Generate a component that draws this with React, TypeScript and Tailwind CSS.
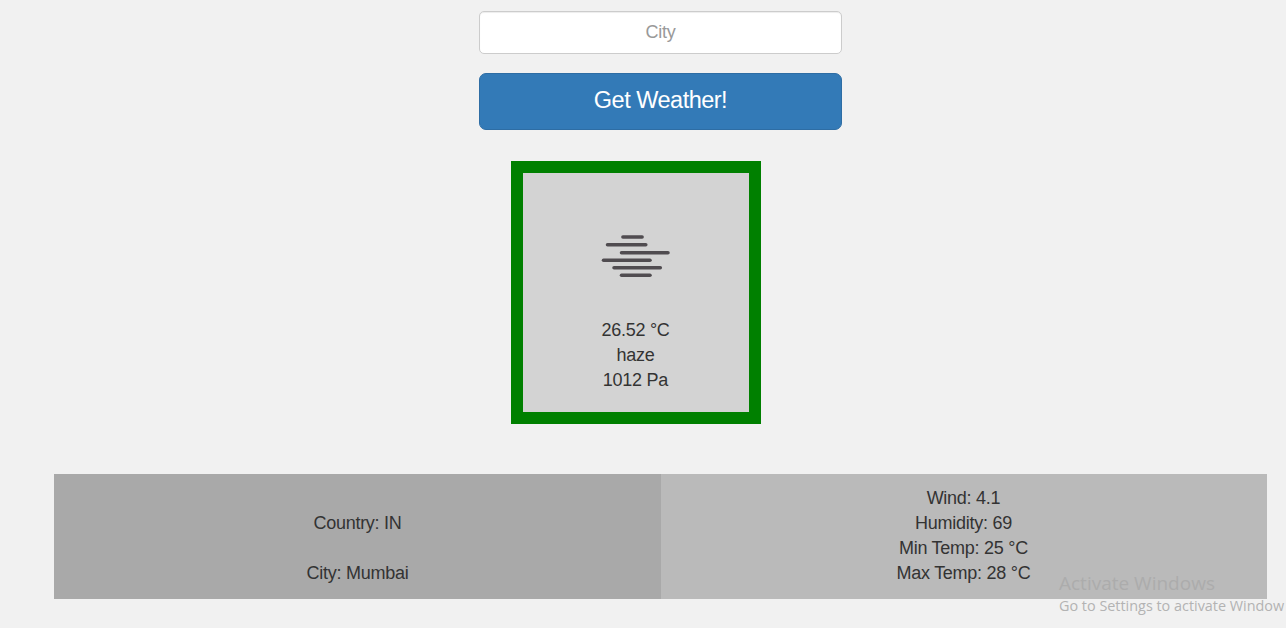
import React from "react";

const hazeBars: [number, number, number][] = [
  [19.2, 41.8, 4],
  [3.8, 45.5, 11.8],
  [17.8, 67.7, 19.8],
  [-0.2, 49.7, 27.2],
  [10.3, 60, 34.8],
  [17.8, 49.7, 42.2],
];

function HazeIcon() {
  return (
    <svg className="block h-[50px] w-[70px]" viewBox="-1 -1 70 50" aria-hidden="true">
      {hazeBars.map(([from, to, y]) => (
        <line
          key={y}
          x1={from + 1.7}
          x2={to - 1.7}
          y1={y}
          y2={y}
          stroke="#504c50"
          strokeWidth={3.5}
          strokeLinecap="round"
        />
      ))}
    </svg>
  );
}

export default function App() {
  return (
    <div className="relative h-[628px] w-full overflow-hidden bg-[#f1f1f1] pt-[11px] font-['Liberation_Sans',Arial,sans-serif] text-[18px] leading-[25px] tracking-[-0.26px] text-[#333333]">
      <form
        className="ml-[479px] flex w-[363px] flex-col gap-[19px]"
        onSubmit={(e) => e.preventDefault()}
      >
        <input
          className="h-[43px] w-full rounded-[5px] border border-[#cccccc] bg-white px-[15px] text-center tracking-[-0.26px] shadow-[inset_0_1px_1px_rgba(0,0,0,0.075)] outline-none placeholder:text-[#999999]"
          placeholder="City"
          aria-label="City"
        />
        <button className="h-[57px] w-full rounded-[7px] border border-[#2e6da4] bg-[#337ab7] pb-[3px] text-[23.5px] leading-[30px] tracking-[-0.5px] text-white">
          Get Weather!
        </button>
      </form>

      <section className="mt-[31px] ml-[511px] flex h-[263px] w-[250px] flex-col items-center border-12 border-[#008000] bg-[#d3d3d3] pt-[59px] text-center">
        <HazeIcon />
        <div className="mt-[36px] pr-px">
          <p>26.52 °C</p>
          <p>haze</p>
          <p>1012 Pa</p>
        </div>
      </section>

      <section className="mt-[50px] ml-[54px] grid h-[125px] w-[1213px] grid-cols-[607px_606px] text-center">
        <div className="flex flex-col gap-[25px] bg-[#a9a9a9] pt-[37px]">
          <p>Country: IN</p>
          <p>City: Mumbai</p>
        </div>
        <div className="bg-[#bababa] pt-3 pr-px">
          <p>Wind: 4.1</p>
          <p>Humidity: 69</p>
          <p>Min Temp: 25 °C</p>
          <p>Max Temp: 28 °C</p>
        </div>
      </section>

      <aside className="pointer-events-none absolute top-[571px] left-[1059px] font-['Open_Sans','Noto_Sans',sans-serif] tracking-normal whitespace-nowrap">
        <p className="text-[19px] leading-[24px] text-[#acacac]">Activate Windows</p>
        <p className="text-[14.4px] leading-[22px] text-[#b3b3b3]">Go to Settings to activate Window</p>
      </aside>
    </div>
  );
}
